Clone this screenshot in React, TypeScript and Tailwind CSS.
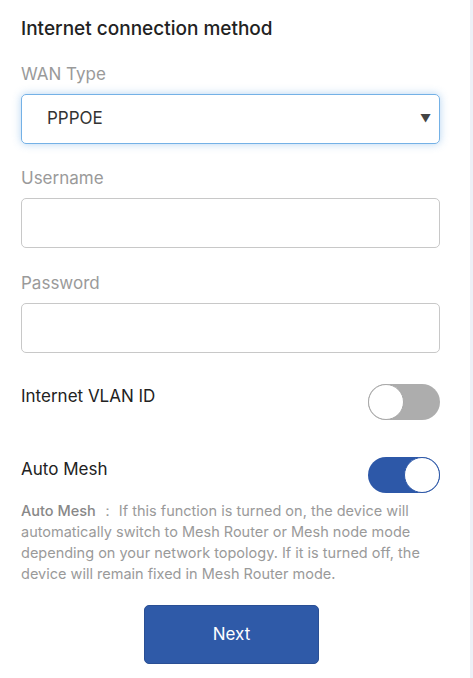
import { useState } from 'react';

function Toggle({ on, onClick }: { on: boolean; onClick: () => void }) {
  return (
    <button
      onClick={onClick}
      className={`relative w-[72px] h-[36px] rounded-full shrink-0 ${on ? 'bg-[#2d58a8]' : 'bg-[#adadad]'}`}
    >
      <span
        className={`absolute top-0 w-[36px] h-[36px] rounded-full bg-white border ${
          on ? 'right-0 border-[#2d58a8]' : 'left-0 border-[#a8a8a8]'
        }`}
      />
    </button>
  );
}

export default function App() {
  const [vlan, setVlan] = useState(false);
  const [mesh, setMesh] = useState(true);

  const inputCls =
    'block w-full h-[50px] border border-[#c8c8c8] rounded-[5px] px-3 text-[17px] text-[#333] bg-white focus:outline-none';

  return (
    <div className="flex w-[473px] min-h-[678px] bg-white font-['Inter','Liberation_Sans',Arial,sans-serif]">
      <div className="w-[470px] pl-[21px] pr-[30px] pt-[17px]">
        <h2 className="text-[19px] leading-[24px] font-medium text-[#222]">Internet connection method</h2>

        <label className="block mt-[22px] text-[17px] leading-[22px] text-[#9a9a9a]">WAN Type</label>
        <div className="relative mt-[9px] h-[50px] border border-[#74b1e6] rounded-[5px] shadow-[0_0_8px_rgba(90,160,225,0.45)] flex items-center pl-[25px]">
          <span className="text-[17px] text-[#333]">PPPOE</span>
          <span className="absolute right-[8px] top-[15px] text-[11px] text-[#444]">▼</span>
        </div>

        <label className="block mt-[23px] text-[17px] leading-[22px] text-[#9a9a9a]">Username</label>
        <input className={`mt-[9px] ${inputCls}`} />

        <label className="block mt-[24px] text-[17px] leading-[22px] text-[#9a9a9a]">Password</label>
        <input type="password" className={`mt-[9px] ${inputCls}`} />

        <div className="mt-[31px] flex justify-between items-start">
          <span className="pt-px text-[17px] leading-[22px] text-[#222]">Internet VLAN ID</span>
          <Toggle on={vlan} onClick={() => setVlan(!vlan)} />
        </div>

        <div className="mt-[37px] flex justify-between items-start">
          <span className="pt-px text-[17px] leading-[22px] text-[#222]">Auto Mesh</span>
          <Toggle on={mesh} onClick={() => setMesh(!mesh)} />
        </div>

        <p className="mt-[7px] text-[14.5px] leading-[21px] text-[#9a9a9a] pr-[4px]">
          <span className="text-[#888] font-medium">Auto Mesh</span>
          <span> ： If this function is turned on, the device will automatically switch to Mesh Router or Mesh node
          mode depending on your network topology. If it is turned off, the device will remain fixed in Mesh Router
          mode.</span>
        </p>

        <div className="flex justify-center mt-[21px] pl-[2px]">
          <button className="w-[175px] h-[59px] bg-[#2f5aa8] border border-[#2a4f94] rounded-[5px] text-white text-[17px]">
            Next
          </button>
        </div>
      </div>
      <div className="w-[3px] bg-[#eef0f7]" />
    </div>
  );
}
